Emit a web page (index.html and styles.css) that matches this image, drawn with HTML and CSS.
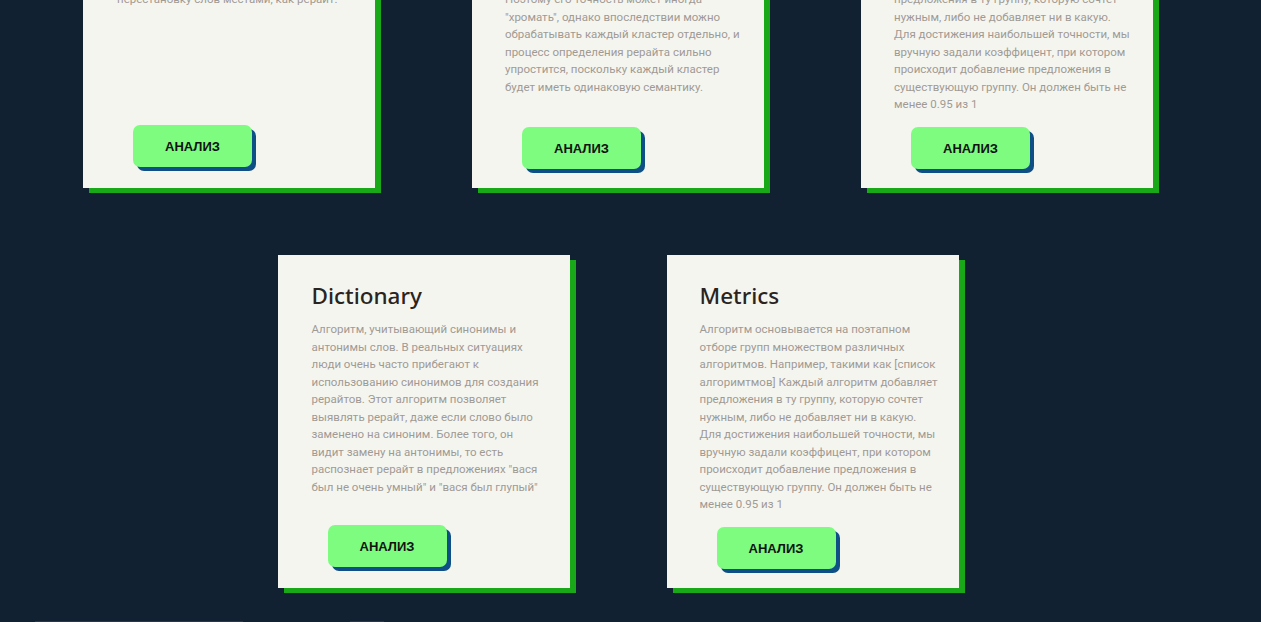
FILE: index.html
```html
<!DOCTYPE html>
<html lang="ru">
<head>
<meta charset="utf-8">
<title>Алгоритмы</title>
<link rel="stylesheet" href="styles.css">
</head>
<body>
<main class="page">
  <section class="cards">
    <article class="card">
      <h2 class="card-title">Shingles</h2>
      <p class="card-text">Алгоритм сравнивает последовательности слов в предложениях. Он быстро находит совпадения, но не распознает перестановку слов местами, как рерайт.</p>
      <button class="btn">АНАЛИЗ</button>
    </article>
    <article class="card card-wide">
      <h2 class="card-title">Clusters</h2>
      <p class="card-text">Алгоритм разбивает все предложения на кластеры по смыслу, используя векторные представления слов. Он не учитывает порядок слов и контекст.<br>Поэтому его точность может иногда "хромать", однако впоследствии можно обрабатывать каждый кластер отдельно, и процесс определения рерайта сильно упростится, поскольку каждый кластер будет иметь одинаковую семантику.</p>
      <button class="btn">АНАЛИЗ</button>
    </article>
    <article class="card card-wide">
      <h2 class="card-title">Metrics</h2>
      <p class="card-text">Алгоритм основывается на поэтапном отборе групп множеством различных алгоритмов. Например, такими как [список алгоримтмов] Каждый алгоритм добавляет предложения в ту группу, которую сочтет нужным, либо не добавляет ни в какую.<br>Для достижения наибольшей точности, мы вручную задали коэффицент, при котором происходит добавление предложения в существующую группу. Он должен быть не менее 0.95 из 1</p>
      <button class="btn">АНАЛИЗ</button>
    </article>
    <article class="card">
      <h2 class="card-title">Dictionary</h2>
      <p class="card-text">Алгоритм, учитывающий синонимы и антонимы слов. В реальных ситуациях люди очень часто прибегают к использованию синонимов для создания рерайтов. Этот алгоритм позволяет выявлять рерайт, даже если слово было заменено на синоним. Более того, он видит замену на антонимы, то есть распознает рерайт в предложениях "вася был не очень умный" и "вася был глупый"</p>
      <button class="btn">АНАЛИЗ</button>
    </article>
    <article class="card card-wide">
      <h2 class="card-title">Metrics</h2>
      <p class="card-text">Алгоритм основывается на поэтапном отборе групп множеством различных алгоритмов. Например, такими как [список алгоримтмов] Каждый алгоритм добавляет предложения в ту группу, которую сочтет нужным, либо не добавляет ни в какую.<br>Для достижения наибольшей точности, мы вручную задали коэффицент, при котором происходит добавление предложения в существующую группу. Он должен быть не менее 0.95 из 1</p>
      <button class="btn">АНАЛИЗ</button>
    </article>
  </section>
  <footer class="footer">
    <span class="footer-line footer-line-wide"></span>
    <span class="footer-line footer-line-short"></span>
  </footer>
</main>
</body>
</html>
```
FILE: styles.css
```css
* { box-sizing: border-box; }

html, body {
  margin: 0;
  padding: 0;
  background: #122131;
  overflow: hidden;
}

body {
  font-family: Roboto, "Noto Sans", sans-serif;
}

.page {
  width: 1236px;
  margin-top: -145px;
}

.cards {
  display: flex;
  flex-wrap: wrap;
  justify-content: center;
  column-gap: 97px;
  row-gap: 67px;
}

.card {
  width: 292px;
  height: 333px;
  background: #f5f5f0;
  box-shadow: 6px 5px 0 #18a818;
  padding: 26px 25px 21px 34px;
  display: flex;
  flex-direction: column;
  align-items: flex-start;
}

.card-wide {
  padding-left: 33px;
  padding-right: 20px;
  padding-bottom: 19px;
}

.card-wide .btn {
  margin-left: 17px;
}

.card-title {
  margin: 0 0 10px 0;
  font-family: "Noto Sans", "Open Sans", sans-serif;
  font-size: 22.5px;
  font-weight: 500;
  line-height: 30px;
  color: #2a2420;
}

.card-text {
  margin: 0;
  font-size: 11.5px;
  line-height: 17.5px;
  color: #a09a94;
}

.btn {
  flex-shrink: 0;
  margin-top: auto;
  margin-left: 16px;
  width: 119px;
  height: 42px;
  border: 0;
  border-radius: 7px;
  background: #7dfc7f;
  box-shadow: 4px 4px 0 #0e4f85;
  font-family: "Liberation Sans", Arial, sans-serif;
  font-weight: 700;
  font-size: 13px;
  color: #121212;
  cursor: pointer;
}

.footer {
  display: flex;
  margin-top: 33px;
  height: 2px;
}

.footer-line {
  height: 1px;
  background: #2a3644;
}

.footer-line-wide {
  width: 208px;
  margin-left: 35px;
}

.footer-line-short {
  width: 34px;
  margin-left: 107px;
}
```
